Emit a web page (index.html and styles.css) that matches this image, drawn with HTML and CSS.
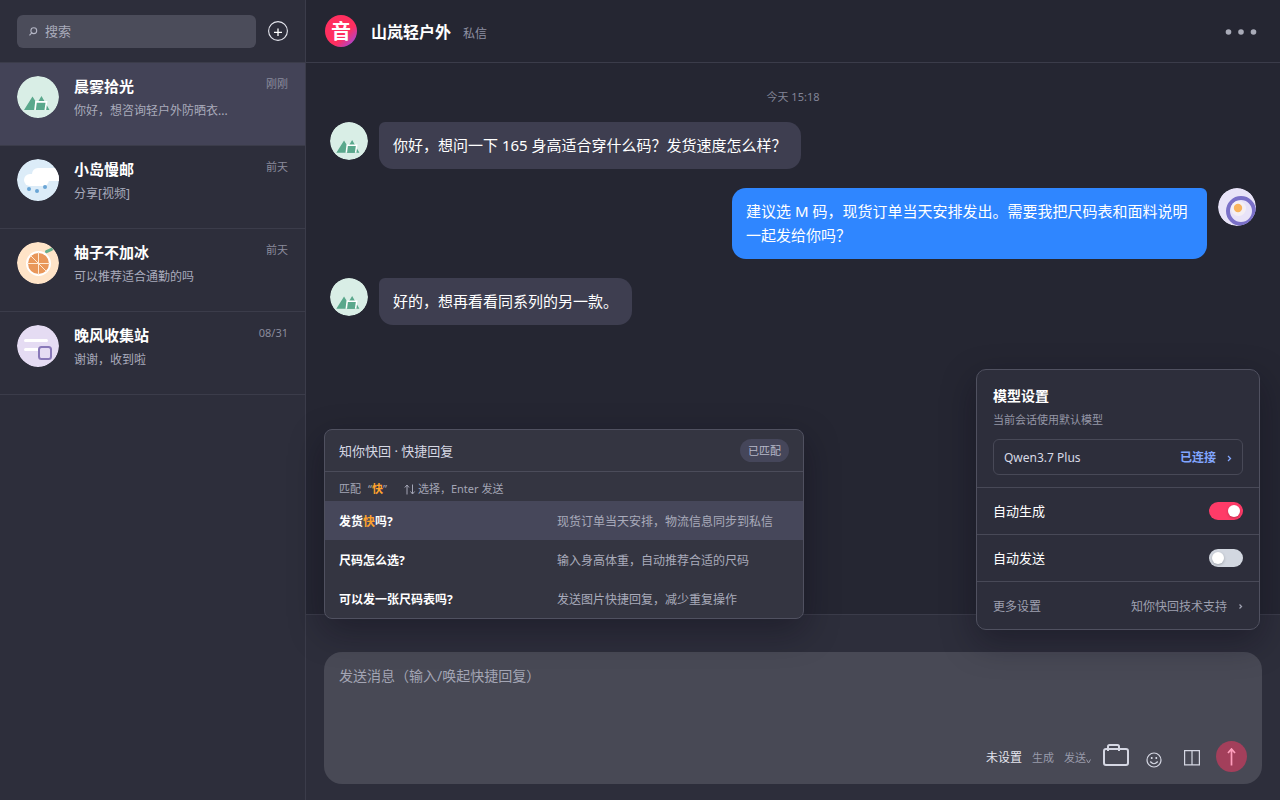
FILE: index.html
```html
<!DOCTYPE html>
<html lang="zh-CN">
<head>
<meta charset="utf-8">
<meta name="viewport" content="width=device-width, initial-scale=1">
<title>山岚轻户外 · 私信</title>
<link rel="stylesheet" href="styles.css">
</head>
<body>
<svg class="defs" aria-hidden="true">
  <symbol id="av-mountain" viewBox="0 0 42 42">
    <circle cx="21" cy="21" r="21" fill="#d9eee6"/>
    <path d="M7 34 15.500 20.500 24 34ZM16 34 24.500 20 32.500 34Z" fill="#5aa88c"/>
    <path d="M18 34 19 25.800H29.500L28.300 34" fill="#5aa88c" stroke="#fff" stroke-width="1.700"/>
  </symbol>
</svg>
<div class="app">
  <aside class="sidebar">
    <div class="side-head">
      <label class="search">
        <svg width="9" height="9" viewBox="0 0 9 9" fill="none" stroke="#b4b6c5" stroke-width="1.100"><circle cx="4.800" cy="3.700" r="2.900"/><path d="M2.700 5.800.500 8.300"/></svg>
        <input type="search" placeholder="搜索" aria-label="搜索">
      </label>
      <button class="add" type="button" aria-label="新建会话">
        <svg width="20" height="20" viewBox="0 0 20 20" fill="none" stroke="#e6e7ef"><circle cx="10" cy="10" r="9.400" stroke-width="1.100"/><path d="M10 7.500v7.500M6 11.300h8" stroke="#fff" stroke-width="1.300"/></svg>
      </button>
    </div>
    <nav class="convs" aria-label="会话">
      <button type="button" class="conv active">
        <svg class="avatar"><use href="#av-mountain"/></svg>
        <span class="conv-body"><span class="conv-name">晨雾拾光</span><span class="conv-text">你好，想咨询轻户外防晒衣...</span></span>
        <span class="conv-time">刚刚</span>
      </button>
      <button type="button" class="conv">
        <svg class="avatar" viewBox="0 0 42 42">
          <circle cx="21" cy="21" r="21" fill="#dcecf8"/>
          <rect x="15" y="9" width="28" height="13" rx="6" fill="#fff"/>
          <path d="M32 14h10v8H32Z" fill="#fff"/>
          <rect x="7" y="15" width="25" height="12" rx="6" fill="#fff"/>
          <g fill="#69a5d5"><circle cx="12" cy="30" r="2"/><circle cx="20" cy="32" r="2"/><circle cx="28" cy="28" r="2"/></g>
        </svg>
        <span class="conv-body"><span class="conv-name">小岛慢邮</span><span class="conv-text">分享[视频]</span></span>
        <span class="conv-time">前天</span>
      </button>
      <button type="button" class="conv">
        <svg class="avatar" viewBox="0 0 42 42">
          <circle cx="21" cy="21" r="21" fill="#ffe4c8"/>
          <circle cx="21.500" cy="21.500" r="11.500" fill="#e9975a" stroke="#fff" stroke-width="2"/>
          <path d="M21.500 10v23M10 21.500h23M13.500 13.500l16 16" stroke="#ffe9d4" fill="none"/>
          <path d="M29.500 9.700 34.500 7.300" stroke="#68ae8d" stroke-width="3" stroke-linecap="round"/>
        </svg>
        <span class="conv-body"><span class="conv-name">柚子不加冰</span><span class="conv-text">可以推荐适合通勤的吗</span></span>
        <span class="conv-time">前天</span>
      </button>
      <button type="button" class="conv">
        <svg class="avatar" viewBox="0 0 42 42">
          <circle cx="21" cy="21" r="21" fill="#e5dcf3"/>
          <path d="M8.500 15.500h21M8.500 24.500h18" stroke="#fff" stroke-width="3" stroke-linecap="round"/>
          <rect x="22" y="22" width="12" height="12" rx="2.500" fill="#e5dcf3" stroke="#8878b8" stroke-width="2"/>
        </svg>
        <span class="conv-body"><span class="conv-name">晚风收集站</span><span class="conv-text">谢谢，收到啦</span></span>
        <span class="conv-time">08/31</span>
      </button>
    </nav>
  </aside>

  <main class="chat">
    <header class="chat-head">
      <span class="brand" aria-hidden="true">音</span>
      <h1>山岚轻户外</h1>
      <span class="channel">私信</span>
      <button type="button" class="more" aria-label="更多">
        <svg width="32" height="6" viewBox="0 0 32 6" fill="#a9abb8"><circle cx="3.500" cy="3" r="2.800"/><circle cx="16" cy="3" r="2.800"/><circle cx="28.500" cy="3" r="2.800"/></svg>
      </button>
    </header>

    <section class="messages" aria-label="消息">
      <time class="stamp">今天 15:18</time>
      <div class="msg">
        <svg class="avatar small"><use href="#av-mountain"/></svg>
        <p class="bubble">你好，想问一下 165 身高适合穿什么码？发货速度怎么样？</p>
      </div>
      <div class="msg mine">
        <p class="bubble">建议选 M 码，现货订单当天安排发出。需要我把尺码表和面料说明一起发给你吗？</p>
        <svg class="avatar small" viewBox="0 0 38 38">
          <circle cx="19" cy="19" r="19" fill="#e8e3f8"/>
          <circle cx="23" cy="23" r="13" fill="#e8e3f8" stroke="#7a70c8" stroke-width="4"/>
          <circle cx="20.500" cy="20.500" r="7.500" fill="#f4eff4"/>
          <circle cx="20" cy="20" r="4.200" fill="#f8b35d"/>
        </svg>
      </div>
      <div class="msg">
        <svg class="avatar small"><use href="#av-mountain"/></svg>
        <p class="bubble">好的，想再看看同系列的另一款。</p>
      </div>
    </section>

    <footer class="composer">
      <div class="box">
        <textarea placeholder="发送消息（输入/唤起快捷回复）" aria-label="发送消息"></textarea>
        <div class="tools">
          <button type="button" class="tool-text strong">未设置</button>
          <button type="button" class="tool-text">生成</button>
          <button type="button" class="tool-text send-mode">发送<svg width="5" height="5" viewBox="0 0 5 5" fill="none" stroke="currentColor"><path d="M.5.500 2.500 4 4.500.500"/></svg></button>
          <button type="button" class="tool case" aria-label="素材">
            <svg width="26" height="22" viewBox="0 0 26 22" fill="none" stroke="#d5d7e3" stroke-width="2"><rect x="1" y="5" width="24" height="16" rx="2"/><path d="M5 7V2.500Q5 1 6.500 1h8Q16 1 16 2.500V7"/></svg>
          </button>
          <button type="button" class="tool smile" aria-label="表情">
            <svg width="16" height="16" viewBox="0 0 16 16" fill="none" stroke="#d5d7e3" stroke-width="1.200"><circle cx="8" cy="8" r="7"/><path d="M4.300 9.500Q8 14 11.700 9.500"/><path d="M5.700 5v2M10.300 5v2" stroke-width="1.600"/></svg>
          </button>
          <button type="button" class="tool panel-btn" aria-label="侧栏">
            <svg width="16" height="16" viewBox="0 0 16 16" fill="none" stroke="#d5d7e3" stroke-width="1.200"><path d="M.600.600h14.800v14.300H.600ZM8 .600v14.300"/></svg>
          </button>
          <button type="button" class="send" aria-label="发送">
            <svg width="9" height="18" viewBox="0 0 9 18" fill="none" stroke="#ff9ebc" stroke-width="1.700"><path d="M4.500 17.500V1M1 5 4.500 1 8 5"/></svg>
          </button>
        </div>
      </div>

      <section class="popup quick" aria-label="快捷回复">
        <div class="quick-head"><h2>知你快回 · 快捷回复</h2><span class="badge">已匹配</span></div>
        <div class="hint">
          <span class="match"><span>匹配</span><span>“<mark>快</mark>”</span></span>
          <span class="keys"><svg width="12" height="11" viewBox="0 0 12 11" fill="none" stroke="currentColor" role="img" aria-label="上下"><path d="M3 10.500V1M.800 3.500 3 1l2 2.500M8.500.500V10M6.500 7.500l2 2.500 2.200-2.500"/></svg>选择，Enter 发送</span>
        </div>
        <button type="button" class="reply active"><strong>发货<mark>快</mark>吗?</strong><span>现货订单当天安排，物流信息同步到私信</span></button>
        <button type="button" class="reply"><strong>尺码怎么选?</strong><span>输入身高体重，自动推荐合适的尺码</span></button>
        <button type="button" class="reply"><strong>可以发一张尺码表吗?</strong><span>发送图片快捷回复，减少重复操作</span></button>
      </section>

      <section class="popup model" aria-label="模型设置">
        <div class="model-head">
          <h2>模型设置</h2>
          <p>当前会话使用默认模型</p>
          <button type="button" class="model-pick"><span>Qwen3.7 Plus</span><b>已连接</b><svg class="chev" viewBox="0 0 5 7"><path d="M1 1l2.500 2.500L1 6"/></svg></button>
        </div>
        <label class="row"><span>自动生成</span><input type="checkbox" class="toggle" checked></label>
        <label class="row"><span>自动发送</span><input type="checkbox" class="toggle"></label>
        <div class="row foot">
          <a href="#settings">更多设置</a>
          <a href="#support" class="support">知你快回技术支持<svg class="chev" viewBox="0 0 5 7"><path d="M1.500 1.500l2 2-2 2"/></svg></a>
        </div>
      </section>
    </footer>
  </main>
</div>
</body>
</html>
```
FILE: styles.css
```css
* { box-sizing: border-box; }
body {
  margin: 0;
  background: #252632;
  color: #fff;
  font: 12px/18px "Noto Sans", "Noto Sans CJK SC", sans-serif;
}
button, input, textarea { font: inherit; color: inherit; }
button { border: 0; padding: 0; background: none; cursor: pointer; }
h1, h2, p { margin: 0; }
a { color: inherit; text-decoration: none; }
svg { display: block; flex: none; }
mark { background: none; color: #ffa42e; font-weight: 700; }
.defs { position: absolute; width: 0; height: 0; }

.app { display: grid; grid-template-columns: 306px minmax(0, 1fr); height: 100vh; }

/* Sidebar */
.sidebar { background: #2d2e3b; border-right: 1px solid #3b3c4a; }
.side-head {
  display: flex; align-items: center; gap: 12px;
  height: 63px; padding: 0 17px;
  border-bottom: 1px solid #3b3c4a;
}
.search {
  flex: 1; min-width: 0; height: 33px; padding: 0 12px;
  display: flex; align-items: center; gap: 7px;
  background: #4b4c5a; border-radius: 6px;
}
.search input {
  flex: 1; min-width: 0; padding: 0; border: 0; outline: 0;
  background: none; font-size: 13px; line-height: 20px;
}
.search input::placeholder { color: #a9abbb; opacity: 1; }
.conv {
  width: 100%; height: 83px; padding: 13px 17px;
  display: flex; align-items: flex-start;
  border-bottom: 1px solid #3b3c4a; text-align: left;
}
.conv.active { background: #434357; }
.avatar { width: 42px; height: 42px; border-radius: 50%; }
.avatar.small { width: 38px; height: 38px; }
.conv-body { flex: 1; min-width: 0; margin-left: 15px; display: grid; gap: 6px; }
.conv-name { font-size: 15px; line-height: 20px; font-weight: 700; }
.conv-text { color: #a9abbb; overflow: hidden; white-space: nowrap; text-overflow: ellipsis; }
.conv-time { font-size: 11px; line-height: 16px; color: #8a8b9c; }

/* Chat */
.chat { display: flex; flex-direction: column; min-width: 0; }
.chat-head {
  display: flex; align-items: center;
  height: 63px; padding: 0 21px 0 19px;
  border-bottom: 1px solid #3b3c4a;
}
.brand {
  width: 32px; height: 32px; border-radius: 50%; margin-right: 14px;
  background: linear-gradient(135deg, #ff2f5f 62%, #8a4dff);
  font-size: 20px; line-height: 34px; font-weight: 700; text-align: center;
}
h1 { padding-top: 1px; font-size: 16px; line-height: 24px; font-weight: 700; }
.channel { margin-left: 12px; padding-top: 5px; color: #8e90a2; }
.more { margin-left: auto; padding: 4px 2px 2px; }
.messages {
  flex: 1; min-height: 0; padding: 26px 24px;
  display: flex; flex-direction: column; gap: 19px;
}
.stamp { align-self: center; margin-bottom: -2px; font-size: 11px; line-height: 16px; color: #828496; }
.msg { display: flex; align-items: flex-start; gap: 11px; }
.msg.mine { justify-content: flex-end; }
.bubble {
  max-width: 475px; padding: 11px 14px 12px;
  border-radius: 6px 14px 14px 14px;
  background: #3e3e50; font-size: 15px; line-height: 24px;
}
.mine .bubble { border-radius: 14px 6px 14px 14px; background: #2f86ff; }

/* Composer */
.composer {
  position: relative; padding: 37px 18px 16px;
  background: #2d2e3b; border-top: 1px solid #3b3c4a;
}
.box {
  display: flex; flex-direction: column; gap: 14px;
  padding: 13px 15px 12px; border-radius: 18px; background: #484955;
}
.box textarea {
  display: block; width: 100%; height: 62px; padding: 0; border: 0; outline: 0;
  resize: none; background: none; font-size: 14px; line-height: 22px;
}
.box textarea::placeholder { color: #a3a5b4; opacity: 1; }
.tools { display: flex; justify-content: flex-end; align-items: center; }
.tool-text { margin-right: 10px; padding-top: 2px; font-size: 11px; color: #999bab; }
.tool-text.strong { font-size: 12px; color: #e4e5ee; }
.send-mode { display: flex; align-items: flex-end; }
.send-mode svg { margin: 0 0 3px; }
.case { margin: 0 17px 3px 2px; }
.smile { margin: 6px 22px 0 0; }
.panel-btn { margin: 2px 16px 0 0; }
.send {
  display: grid; place-items: center;
  width: 31px; height: 31px; border-radius: 50%; background: #a33f5b;
}

/* Floating panels */
.popup {
  position: absolute; overflow: hidden;
  border: 1px solid #505160; border-radius: 10px;
  box-shadow: 0 12px 34px rgba(10, 8, 20, .38);
}
.quick { left: 18px; bottom: 181px; width: 480px; border-radius: 8px; background: #343541; }
.quick-head {
  display: flex; align-items: center; justify-content: space-between;
  height: 42px; padding: 0 14px; border-bottom: 1px solid #4b4c5a;
}
.quick h2 { font-size: 13px; line-height: 20px; font-weight: 400; color: #d5d7e3; }
.badge { padding: 0 8px; border-radius: 12px; background: #45465a; color: #b6b8c8; font-size: 11px; line-height: 23px; }
.hint {
  display: flex; gap: 17px; padding: 9px 14px 4px;
  color: #a3a5b5; font-size: 11px; line-height: 16px;
}
.match { display: flex; gap: 7px; }
.keys { display: flex; align-items: center; gap: 2px; }
.reply {
  display: grid; grid-template-columns: 200px 1fr; gap: 18px; align-items: center;
  width: 100%; height: 39px; padding: 2px 14px 0; text-align: left;
}
.reply.active { background: #46475a; }
.reply span { color: #a9abbb; }

.model { right: 20px; bottom: 170px; width: 284px; background: #2d2e3b; }
.model-head { padding: 15px 16px 12px; }
.model h2 { font-size: 14px; line-height: 22px; font-weight: 700; }
.model-head p { margin: 5px 0 11px; color: #9496a6; font-size: 11px; line-height: 16px; }
.model-pick {
  display: flex; align-items: center; width: 100%; height: 36px; padding: 2px 10px 0;
  border: 1px solid #484957; border-radius: 6px; color: #d8dae6;
}
.model-pick b { margin-left: auto; color: #82a6ff; }
.chev { width: 5px; height: 7px; margin-left: 11px; fill: none; stroke: #82a6ff; stroke-width: 1.3px; }
.row {
  display: flex; align-items: center; justify-content: space-between;
  height: 47px; padding: 0 16px; border-top: 1px solid #484957;
  font-size: 13px; line-height: 20px;
}
.toggle {
  appearance: none; width: 34px; height: 18px; margin: 0; padding: 3px;
  display: flex; border-radius: 9px; background: #d2d7e0;
}
.toggle::before {
  content: ""; width: 12px; height: 12px; border-radius: 50%;
  background: #fff; box-shadow: 0 1px 3px rgba(0, 0, 0, .25);
}
.toggle:checked { justify-content: flex-end; background: #ff3b68; }
.foot { height: 48px; padding-top: 2px; font-size: 12px; color: #9ea0b0; }
.support { display: flex; align-items: center; }
.foot .chev { stroke: #9ea0b0; }
```
